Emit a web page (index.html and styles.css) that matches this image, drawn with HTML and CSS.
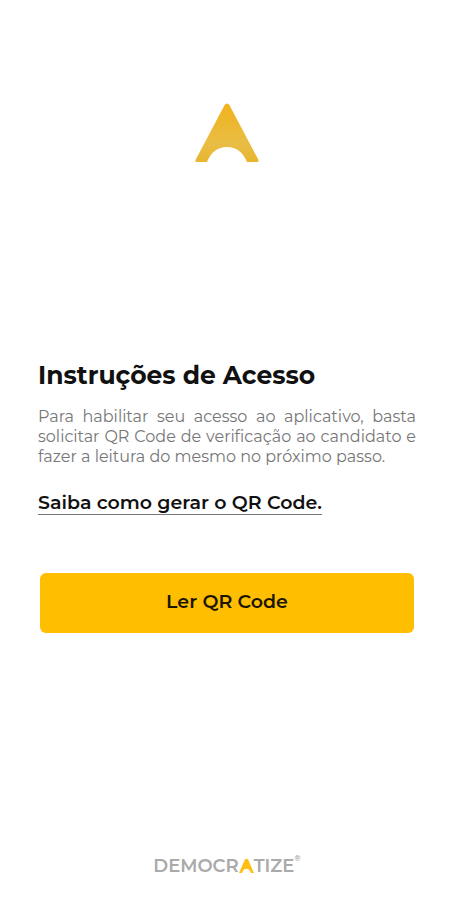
FILE: index.html
```html
<!DOCTYPE html>
<html lang="pt-BR">
<head>
<meta charset="utf-8">
<meta name="viewport" content="width=device-width, initial-scale=1">
<title>Instruções de Acesso</title>
<link rel="stylesheet" href="styles.css">
</head>
<body>
<div class="screen">
  <header class="brand">
    <svg class="brand-mark" viewBox="0 0 64 60" role="img" aria-label="Democratize">
      <defs>
        <linearGradient id="gold" x1="0" y1="0" x2="0" y2="1">
          <stop offset="0" stop-color="#f0b31c"/>
          <stop offset="0.7" stop-color="#e9bd45"/>
          <stop offset="1" stop-color="#e8b52d"/>
        </linearGradient>
      </defs>
      <path fill="url(#gold)" d="M29.600 2Q32-1 34.400 2L63.500 57Q64 59 62 59H52C48 49 41 44 32 44S16 49 12 59H2Q0 59 .5 57Z"/>
    </svg>
  </header>
  <main class="content">
    <h1 class="title">Instruções de Acesso</h1>
    <p class="description">Para habilitar seu acesso ao aplicativo, basta solicitar QR Code de verificação ao candidato e fazer a leitura do mesmo no próximo passo.</p>
    <a class="help" href="#qr-code">Saiba como gerar o QR Code.</a>
    <button class="action" type="button">Ler QR Code</button>
  </main>
  <footer class="footer">
    <span>DEMOCR</span>
    <svg class="footer-mark" viewBox="0 0 64 60" aria-hidden="true">
      <path fill="#fdbf16" d="M26 0H38L64 60H51Q46 43 32 42Q18 43 13 60H0Z"/>
    </svg>
    <span>TIZE</span>
    <span class="registered">®</span>
  </footer>
</div>
</body>
</html>
```

FILE: styles.css
```css
* {
  box-sizing: border-box;
}

body {
  margin: 0;
  background: #fff;
  color: #111;
  font-family: Montserrat, Inter, sans-serif;
}

.screen {
  display: flex;
  flex-direction: column;
  min-height: 100vh;
  padding: 103px 36px 22px 38px;
}

.brand {
  display: flex;
  justify-content: center;
}

.brand-mark {
  width: 64px;
  height: 60px;
}

.content {
  display: flex;
  flex-direction: column;
  align-items: flex-start;
  margin-top: 196px;
}

.title {
  margin: 0;
  font-size: 25px;
  line-height: 32px;
  font-weight: 700;
}

.description {
  margin: 16px 0 0;
  color: #777;
  font-size: 16px;
  line-height: 20px;
  font-weight: 400;
  text-align: justify;
}

.help {
  margin-top: 25px;
  border-bottom: 1px solid #777;
  color: #111;
  font-size: 19px;
  line-height: 22px;
  font-weight: 600;
  text-decoration: none;
}

.action {
  align-self: stretch;
  height: 60px;
  margin: 58px 2px 0;
  padding-bottom: 4px;
  border: 0;
  border-radius: 6px;
  background: #ffbf00;
  color: #1c1600;
  font: inherit;
  font-size: 19px;
  font-weight: 600;
}

.footer {
  display: flex;
  align-items: center;
  justify-content: center;
  margin-top: auto;
  color: #aaa;
  font-size: 18px;
  line-height: 24px;
  font-weight: 600;
}

.footer-mark {
  width: 15px;
  height: 14px;
}

.registered {
  align-self: flex-start;
  font-size: 8px;
  line-height: 8px;
}
```
